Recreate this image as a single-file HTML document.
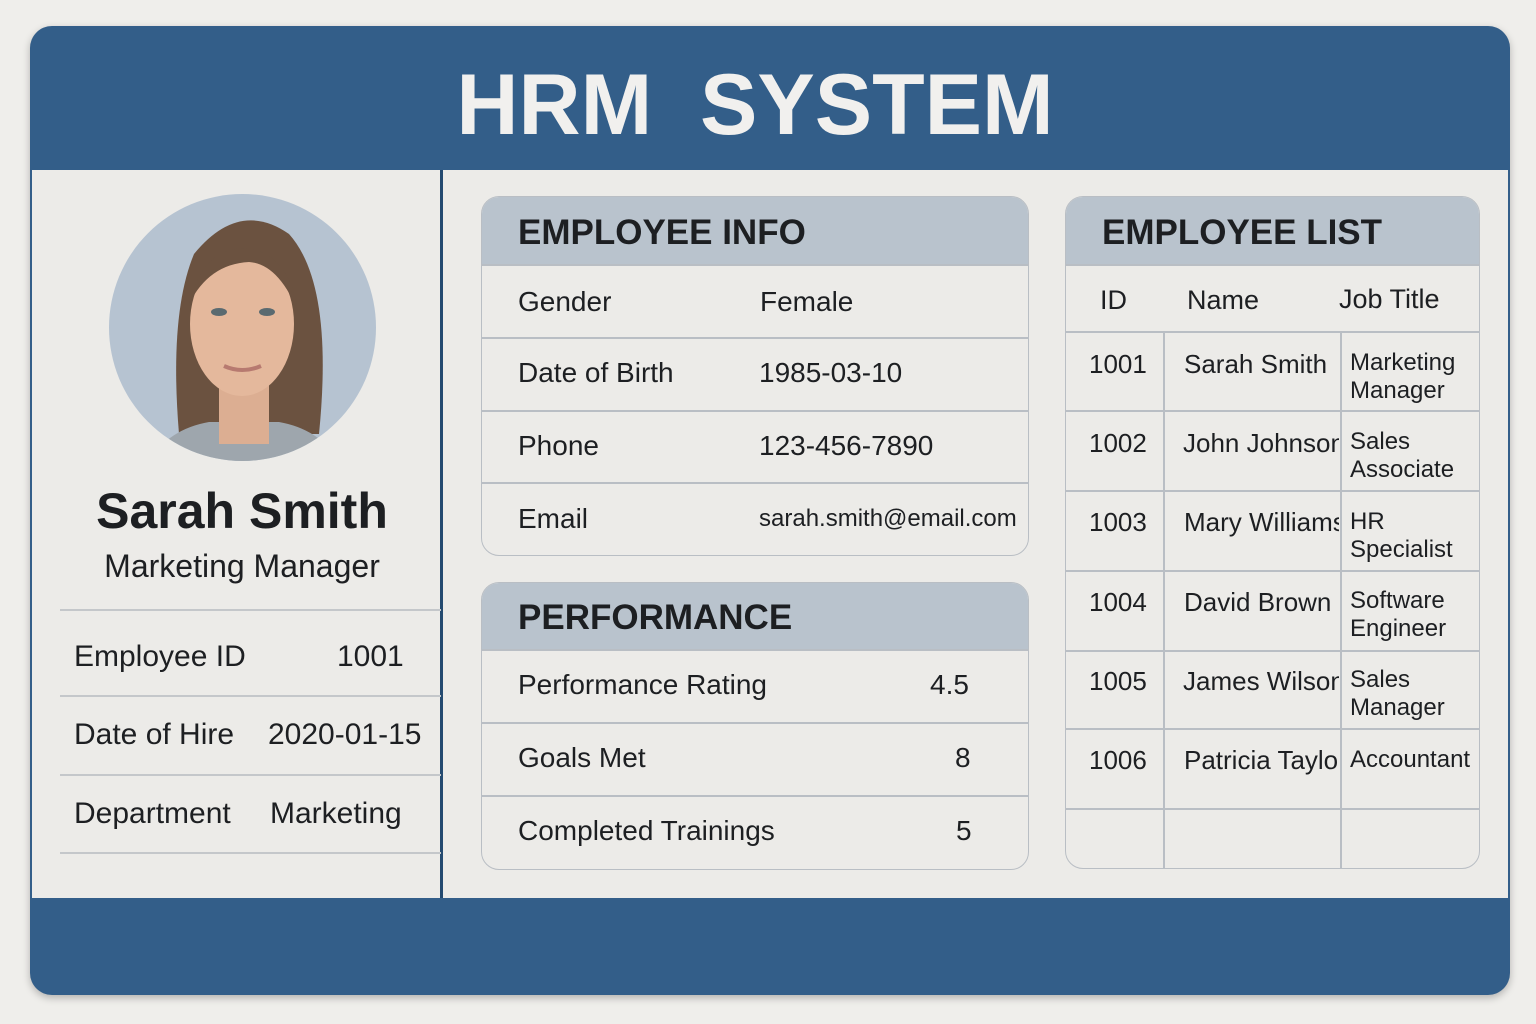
<!DOCTYPE html>
<html><head><meta charset="utf-8"><style>
*{margin:0;padding:0;box-sizing:border-box}
body{width:1536px;height:1024px;background:#efeeeb;font-family:"Liberation Sans","DejaVu Sans",sans-serif;color:#1d1f22;position:relative;overflow:hidden}
.a{position:absolute}
.card{left:30px;top:26px;width:1480px;height:969px;border-radius:22px;background:#335e89;overflow:hidden;box-shadow:0 3px 8px rgba(0,0,0,.25)}
.body{left:2px;top:144px;width:1476px;height:728px;background:#ecebe8}
.t{position:absolute;white-space:nowrap}
.box{position:absolute;border:1.5px solid #b9bec4;border-radius:18px;background:#ecebe8;overflow:hidden}
.hd{position:absolute;left:0;top:0;right:0;background:#b9c3cd;font-weight:bold;font-size:35px;padding-left:36px}
.hl{position:absolute;left:0;right:0;height:1.5px;background:#b9bec4}
.vl{position:absolute;width:1.5px;background:#b9bec4}
.r{font-size:28px}
.ll{position:absolute;left:60px;width:381px;height:1.5px;background:#c4c7ca}
</style></head><body>
<div class="a card">
<div class="t" style="left:413px;width:624px;text-align:center;top:30px;font-size:86px;font-weight:bold;color:#f1f0ee;letter-spacing:0px">HRM&nbsp;&nbsp;SYSTEM</div>
<div class="a body"></div>
<div class="a" style="left:410px;top:144px;width:2.5px;height:728px;background:#244a70"></div>
</div>

<svg class="a" style="left:109px;top:194px" width="267" height="267" viewBox="0 0 267 267">
<defs><clipPath id="c"><circle cx="133.5" cy="133.5" r="133.5"/></clipPath></defs>
<g clip-path="url(#c)">
<rect width="267" height="267" fill="#b6c3d1"/>
<path d="M70 240 Q60 120 85 60 Q130 5 180 40 Q225 90 210 240 Z" fill="#6b5240"/>
<path d="M40 267 Q60 235 100 228 L170 228 Q210 235 230 267 Z" fill="#9ea6ad"/>
<rect x="110" y="190" width="50" height="60" fill="#dcae92"/>
<ellipse cx="133" cy="130" rx="52" ry="72" fill="#e4b89c"/>
<path d="M80 110 Q95 50 140 55 Q180 60 190 120 Q170 70 140 68 Q100 70 80 110Z" fill="#6b5240"/>
<ellipse cx="110" cy="118" rx="8" ry="4" fill="#5a6a70"/>
<ellipse cx="158" cy="118" rx="8" ry="4" fill="#5a6a70"/>
<path d="M115 172 Q133 180 152 172" stroke="#b77a70" stroke-width="4" fill="none"/>
</g></svg>

<div class="t" style="left:0;width:484px;text-align:center;top:482px;font-size:50px;font-weight:bold">Sarah Smith</div>
<div class="t" style="left:0;width:484px;text-align:center;top:548px;font-size:32px">Marketing Manager</div>
<div class="ll" style="top:609px"></div>
<div class="ll" style="top:695px"></div>
<div class="ll" style="top:774px"></div>
<div class="ll" style="top:852px"></div>
<div class="t r" style="left:74px;top:640px;font-size:30px">Employee ID</div>
<div class="t r" style="left:337px;top:640px;font-size:30px">1001</div>
<div class="t r" style="left:74px;top:718px;font-size:30px">Date of Hire</div>
<div class="t r" style="left:268px;top:718px;font-size:30px">2020-01-15</div>
<div class="t r" style="left:74px;top:797px;font-size:30px">Department</div>
<div class="t r" style="left:270px;top:797px;font-size:30px">Marketing</div>

<div class="box" style="left:481px;top:196px;width:548px;height:360px">
<div class="hd" style="height:68px;line-height:72px">EMPLOYEE INFO</div>
<div class="hl" style="top:67px"></div>
<div class="hl" style="top:140px"></div>
<div class="hl" style="top:213px"></div>
<div class="hl" style="top:285px"></div>
<div class="t r" style="left:36px;top:89px">Gender</div><div class="t r" style="left:278px;top:89px">Female</div>
<div class="t r" style="left:36px;top:160px">Date of Birth</div><div class="t r" style="left:277px;top:160px">1985-03-10</div>
<div class="t r" style="left:36px;top:233px">Phone</div><div class="t r" style="left:277px;top:233px">123-456-7890</div>
<div class="t r" style="left:36px;top:306px">Email</div><div class="t" style="left:277px;top:308px;font-size:24px">sarah.smith@email.com</div>
</div>

<div class="box" style="left:481px;top:582px;width:548px;height:288px">
<div class="hd" style="height:67px;line-height:70px">PERFORMANCE</div>
<div class="hl" style="top:66px"></div>
<div class="hl" style="top:139px"></div>
<div class="hl" style="top:212px"></div>
<div class="t r" style="left:36px;top:86px">Performance Rating</div><div class="t r" style="left:448px;top:86px">4.5</div>
<div class="t r" style="left:36px;top:159px">Goals Met</div><div class="t r" style="left:473px;top:159px">8</div>
<div class="t r" style="left:36px;top:232px">Completed Trainings</div><div class="t r" style="left:474px;top:232px">5</div>
</div>

<div class="box" style="left:1065px;top:196px;width:415px;height:673px">
<div class="hd" style="height:68px;line-height:72px">EMPLOYEE LIST</div>
<div class="hl" style="top:67px"></div>
<div class="hl" style="top:134px"></div>
<div class="hl" style="top:213px"></div>
<div class="hl" style="top:293px"></div>
<div class="hl" style="top:373px"></div>
<div class="hl" style="top:453px"></div>
<div class="hl" style="top:531px"></div>
<div class="hl" style="top:611px"></div>
<div class="vl" style="left:97px;top:134px;height:540px"></div>
<div class="vl" style="left:274px;top:134px;height:540px"></div>
<div class="t" style="left:34px;top:88px;font-size:27px">ID</div>
<div class="t" style="left:121px;top:88px;font-size:27px">Name</div>
<div class="t" style="left:273px;top:87px;font-size:27px">Job Title</div>
<div style="position:absolute;left:0;top:0;font-size:26px">
<div class="t" style="left:23px;top:152px">1001</div><div class="t" style="left:118px;top:152px">Sarah Smith</div>
<div class="t" style="left:23px;top:231px">1002</div><div class="t" style="left:117px;top:231px;width:156px;overflow:hidden">John Johnson</div>
<div class="t" style="left:23px;top:310px">1003</div><div class="t" style="left:118px;top:310px;width:155px;overflow:hidden">Mary Williams</div>
<div class="t" style="left:23px;top:390px">1004</div><div class="t" style="left:118px;top:390px">David Brown</div>
<div class="t" style="left:23px;top:469px">1005</div><div class="t" style="left:117px;top:469px;width:156px;overflow:hidden">James Wilson</div>
<div class="t" style="left:23px;top:548px">1006</div><div class="t" style="left:118px;top:548px;width:155px;overflow:hidden">Patricia Taylor</div>
</div>
<div style="position:absolute;left:284px;top:0;font-size:24px;line-height:28px">
<div class="t" style="top:152px">Marketing<br>Manager</div>
<div class="t" style="top:231px">Sales<br>Associate</div>
<div class="t" style="top:311px">HR<br>Specialist</div>
<div class="t" style="top:390px">Software<br>Engineer</div>
<div class="t" style="top:469px">Sales<br>Manager</div>
<div class="t" style="top:549px">Accountant</div>
</div>
</div>
</body></html>
